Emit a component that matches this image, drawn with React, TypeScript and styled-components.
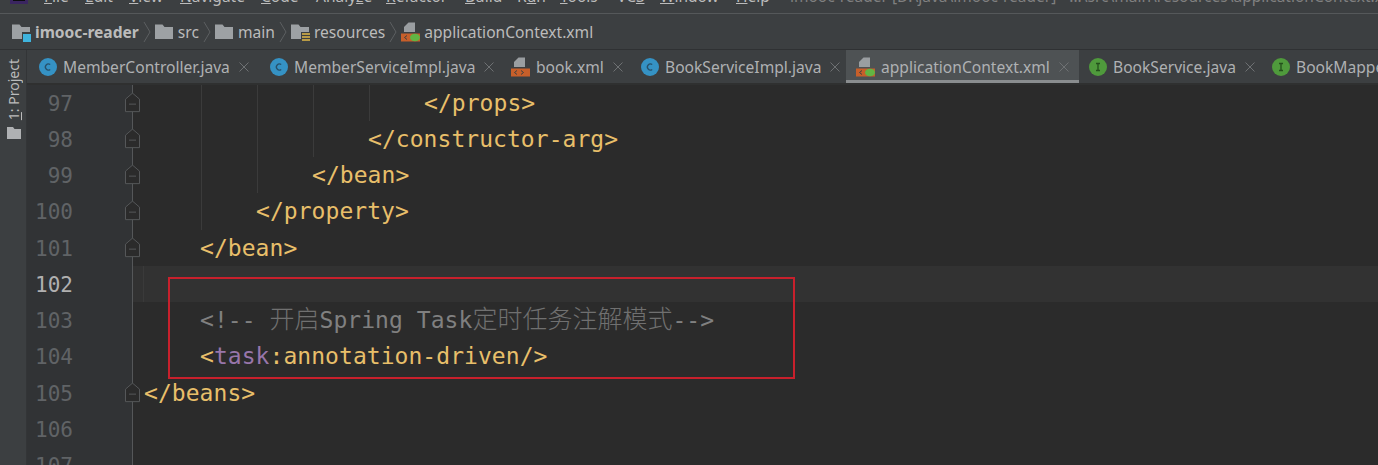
import React from "react";
import styled, { createGlobalStyle } from "styled-components";

const Global = createGlobalStyle`
  html, body { margin: 0; padding: 0; height: 465px; overflow: hidden; background: #2b2b2b; }
  #root { height: 465px; }
`;

const UI = `"Noto Sans", "Open Sans", sans-serif`;
const MONO = `"DejaVu Sans Mono", "Noto Sans CJK SC", monospace`;

const Page = styled.div`
  width: 1378px; height: 465px; overflow: hidden; display: flex; flex-direction: column;
  background: #3c3f41; font-family: ${UI}; color: #bbbbbb;
`;
const MenuBar = styled.div`
  height: 13px; flex: none; overflow: hidden; display: flex; align-items: flex-end;
  border-bottom: 1px solid #55585a; padding-left: 10px; background: #3c3f41;
`;
const Logo = styled.svg`width: 18px; height: 18px; flex: none; margin-bottom: 9px;`;
const Menu = styled.span<{ $w: number }>`
  font-size: 15.5px; line-height: 20px; width: ${p => p.$w}px; flex: none; color: #bbbbbb; margin-bottom: 7px;
  u { text-decoration-thickness: 1px; text-underline-offset: 1px; }
`;
const MenuLead = styled.div`width: 16px; flex: none;`;
const Title = styled.span`
  font-size: 15.5px; line-height: 20px; color: #808080; white-space: nowrap; margin-bottom: 7px;
`;
const NavBar = styled.div`
  height: 35px; flex: none; display: flex; align-items: center; padding-left: 12px;
  border-bottom: 1px solid #2f3133; background: #3c3f41;
`;
const Crumb = styled.span<{ $bold?: boolean; $tight?: boolean }>`
  font-size: 15.6px; font-weight: ${p => (p.$bold ? 700 : 400)}; margin-left: ${p => (p.$tight ? 4 : 5)}px; color: #bbbbbb; white-space: nowrap;
`;
const Chevron = styled.svg`width: 8px; height: 22px; margin: 0 4px; flex: none;`;
const Main = styled.div`flex: 1; display: flex; min-height: 0;`;
const Strip = styled.div`
  width: 27px; flex: none; display: flex; flex-direction: column; align-items: center;
  padding: 9px 0 0 2px; gap: 7px; border-right: 1px solid #333537; box-sizing: border-box;
`;
const StripLabel = styled.span`
  writing-mode: vertical-rl; transform: rotate(180deg); font-size: 14px; line-height: 16px; color: #bbbbbb; white-space: nowrap;
`;
const Content = styled.div`flex: 1; min-width: 0; display: flex; flex-direction: column;`;
const TabBar = styled.div`
  height: 33px; flex: none; display: flex; overflow: hidden; background: #3c3f41; border-bottom: 2px solid #2f3030;
`;
const Tab = styled.div<{ $active?: boolean; $w: number; $pad: number }>`
  width: ${p => p.$w}px; flex: none; box-sizing: border-box; display: flex; align-items: center;
  padding-left: ${p => p.$pad}px; padding-top: 4px;
  background: ${p => (p.$active ? "#4e5254" : "transparent")};
  border-bottom: 3px solid ${p => (p.$active ? "#8a8d8f" : "transparent")};
`;
const TabLabel = styled.span`
  font-size: 15.6px; color: #afb1b3; margin-left: 6px; white-space: nowrap;
`;
const Close = styled.svg`width: 10px; height: 10px; margin-left: 9px; flex: none;`;
const Editor = styled.div`flex: 1; min-height: 0; overflow: hidden; background: #2b2b2b; position: relative;`;
const Line = styled.div<{ $current?: boolean }>`
  height: 36.25px; display: flex; background: ${p => (p.$current ? "#323232" : "transparent")};
  &:first-child { margin-top: -0.3px; }
`;
const Gutter = styled.div<{ $current?: boolean }>`
  width: 105px; flex: none; box-sizing: border-box; display: flex; background: #313335;
  font: 21px/36.25px ${MONO}; color: ${p => (p.$current ? "#b0b0b0" : "#606366")};
`;
const LineNo = styled.span`width: 46px; text-align: right; flex: none; padding-top: 1px;`;
const FoldArea = styled.div`
  width: 11px; flex: none; display: flex; box-sizing: border-box; border-left: 1px solid #555759;
`;
const Fold = styled.svg`width: 15px; height: 36.25px; flex: none; margin-left: -8px;`;
const Code = styled.div<{ $current?: boolean }>`
  flex: 1; display: flex; font: 23px/36.25px ${MONO}; letter-spacing: 0.05px; white-space: pre;
  border-left: 1px solid ${p => (p.$current ? "#3a3a3a" : "transparent")};
`;
const Indent = styled.span<{ $guide?: boolean }>`
  width: 56px; flex: none;
  background: ${p => (p.$guide ? "linear-gradient(#3b3b3b, #3b3b3b) 1px 0 / 1px 100% no-repeat" : "none")};
`;
const Tag = styled.span`color: #e8bf6a;`;
const Ns = styled.span`color: #9876aa;`;
const Comment = styled.span`color: #808080;`;
const CommentCjk = styled.span`font-size: 25px; font-weight: 300; letter-spacing: 0; color: #707070;`;
const Note = styled.div`
  position: absolute; left: 141px; top: 192px; width: 627px; height: 102px; box-sizing: border-box;
  border: 2px solid #c8202c; pointer-events: none;
`;

const FolderIcon = ({ badge }: { badge?: "module" | "res" }) => (
  <svg width="19" height="20" viewBox="0 0 19 20" style={{ flex: "none", marginRight: -1 }}>
    <path d="M0 2.5h7.5l2 2.5H18V17H0z" fill="#9da1a4" />
    {badge === "module" && (
      <g>
        <rect x="10" y="10" width="9" height="10" fill="#3c3f41" />
        <rect x="11" y="12" width="8" height="8" fill="#3fb4de" />
      </g>
    )}
    {badge === "res" && (
      <g fill="#b89a45">
        <rect x="10" y="10" width="9" height="10" fill="#3c3f41" />
        <rect x="11" y="11" width="8" height="2" />
        <rect x="11" y="14" width="8" height="2" />
        <rect x="11" y="17" width="8" height="2" />
      </g>
    )}
  </svg>
);

const XmlIcon = ({ spring }: { spring?: boolean }) => (
  <svg width="19" height="20" viewBox="0 0 19 20" style={{ flex: "none" }}>
    <path d="M7.5 0.5H14V10H3V5z" fill="#9a9ea1" />
    <rect x="0" y="11.5" width="19" height="8" fill="#c75f2a" />
    <path d="M6 13.5l-2.5 2 2.5 2M10 13.5l2.5 2-2.5 2" stroke="#3c3f41" strokeWidth="1" fill="none" />
    {spring && <ellipse cx="14" cy="15.5" rx="5" ry="3.8" fill="#62b543" />}
  </svg>
);

const ClassIcon = ({ letter }: { letter: "C" | "I" }) => (
  <svg width="18" height="18" viewBox="0 0 18 18" style={{ flex: "none" }}>
    <circle cx="9" cy="9" r="9" fill={letter === "C" ? "#3592c4" : "#4f9a3c"} />
    {letter === "C" ? (
      <path d="M11.2 6.6A3 3 0 1 0 11.2 11.4" stroke="#27506a" strokeWidth="1.3" fill="none" />
    ) : (
      <path d="M7 5.5h4M7 12.5h4M9 5.5v7" stroke="#24501c" strokeWidth="1.3" fill="none" />
    )}
  </svg>
);

const Sep = () => (
  <Chevron viewBox="0 0 8 22"><path d="M1 1l6 10-6 10" stroke="#5c5f61" strokeWidth="1" fill="none" /></Chevron>
);
const CloseIcon = () => (
  <Close viewBox="0 0 10 10"><path d="M0.5 0.5l9 9M9.5 0.5l-9 9" stroke="#6e7173" strokeWidth="1" /></Close>
);

const menus: [string, number, number][] = [
  ["File", 0, 41], ["Edit", 0, 44], ["View", 0, 51], ["Navigate", 0, 81], ["Code", 0, 55],
  ["Analyze", 5, 70], ["Refactor", 0, 79], ["Build", 0, 52], ["Run", 1, 43], ["Tools", 0, 57],
  ["VCS", 2, 43], ["Window", 0, 76], ["Help", 0, 54],
];

const tabs = [
  { name: "MemberController.java", icon: "C", w: 231, pad: 12 },
  { name: "MemberServiceImpl.java", icon: "C", w: 241, pad: 12 },
  { name: "book.xml", icon: "X", w: 130, pad: 12 },
  { name: "BookServiceImpl.java", icon: "C", w: 217, pad: 12 },
  { name: "applicationContext.xml", icon: "S", w: 233, pad: 10, active: true },
  { name: "BookService.java", icon: "I", w: 183, pad: 10 },
  { name: "BookMapper.java", icon: "I", w: 183, pad: 10 },
];

const lines: { n: number; indent: number; guides: number; body?: React.ReactNode; fold?: boolean; current?: boolean }[] = [
  { n: 97, indent: 5, guides: 4, body: <Tag>{"</props>"}</Tag>, fold: true },
  { n: 98, indent: 4, guides: 3, body: <Tag>{"</constructor-arg>"}</Tag>, fold: true },
  { n: 99, indent: 3, guides: 2, body: <Tag>{"</bean>"}</Tag>, fold: true },
  { n: 100, indent: 2, guides: 1, body: <Tag>{"</property>"}</Tag>, fold: true },
  { n: 101, indent: 1, guides: 0, body: <Tag>{"</bean>"}</Tag>, fold: true },
  { n: 102, indent: 0, guides: 0, current: true },
  { n: 103, indent: 1, guides: 0, body: <Comment>{"<!-- "}<CommentCjk>开启</CommentCjk>{"Spring Task"}<CommentCjk>定时任务注解模式</CommentCjk>{"-->"}</Comment> },
  { n: 104, indent: 1, guides: 0, body: <Tag>{"<"}<Ns>task</Ns>{":annotation-driven/>"}</Tag> },
  { n: 105, indent: 0, guides: 0, body: <Tag>{"</beans>"}</Tag>, fold: true },
  { n: 106, indent: 0, guides: 0 },
  { n: 107, indent: 0, guides: 0 },
];

export default function App() {
  return (
    <Page>
      <Global />
      <MenuBar>
        <Logo viewBox="0 0 18 18">
          <rect width="18" height="18" fill="#3a2560" />
          <rect x="3" y="2" width="12" height="13" fill="#0c0c10" />
        </Logo>
        <MenuLead />
        {menus.map(([m, idx, w]) => (
          <Menu key={m} $w={w}>
            {m.slice(0, idx)}<u>{m[idx]}</u>{m.slice(idx + 1)}
          </Menu>
        ))}
        <Title>imooc-reader [D:\java\imooc-reader] - ...\src\main\resources\applicationContext.xml</Title>
      </MenuBar>
      <NavBar>
        <FolderIcon badge="module" />
        <Crumb $bold>imooc-reader</Crumb>
        <Sep />
        <FolderIcon />
        <Crumb>src</Crumb>
        <Sep />
        <FolderIcon />
        <Crumb>main</Crumb>
        <Sep />
        <FolderIcon badge="res" />
        <Crumb>resources</Crumb>
        <Sep />
        <XmlIcon spring />
        <Crumb $tight>applicationContext.xml</Crumb>
      </NavBar>
      <Main>
        <Strip>
          <StripLabel><u>1</u>: Project</StripLabel>
          <svg width="14" height="12" viewBox="0 0 14 12"><path d="M0 0h6l1.5 2H14v10H0z" fill="#afb1b3" /></svg>
        </Strip>
        <Content>
          <TabBar>
            {tabs.map(t => (
              <Tab key={t.name} $active={t.active} $w={t.w} $pad={t.pad}>
                {t.icon === "C" || t.icon === "I" ? <ClassIcon letter={t.icon} /> : <XmlIcon spring={t.icon === "S"} />}
                <TabLabel>{t.name}</TabLabel>
                <CloseIcon />
              </Tab>
            ))}
          </TabBar>
          <Editor>
            {lines.map(l => (
              <Line key={l.n} $current={l.current}>
                <Gutter $current={l.current}>
                  <LineNo>{l.n}</LineNo>
                </Gutter>
                <FoldArea>
                  {l.fold && (
                    <Fold viewBox="0 0 15 36">
                      <path d="M0.5 26.5V14L7.5 8l7 6v12.5z" fill="#2b2b2b" stroke="#555759" />
                      <path d="M4 19h7" stroke="#555759" />
                    </Fold>
                  )}
                </FoldArea>
                <Code $current={l.current}>
                  {Array.from({ length: l.indent }, (_, i) => (
                    <Indent key={i} $guide={i >= 1 && i <= l.guides} />
                  ))}
                  {l.body}
                </Code>
              </Line>
            ))}
            <Note />
          </Editor>
        </Content>
      </Main>
    </Page>
  );
}
